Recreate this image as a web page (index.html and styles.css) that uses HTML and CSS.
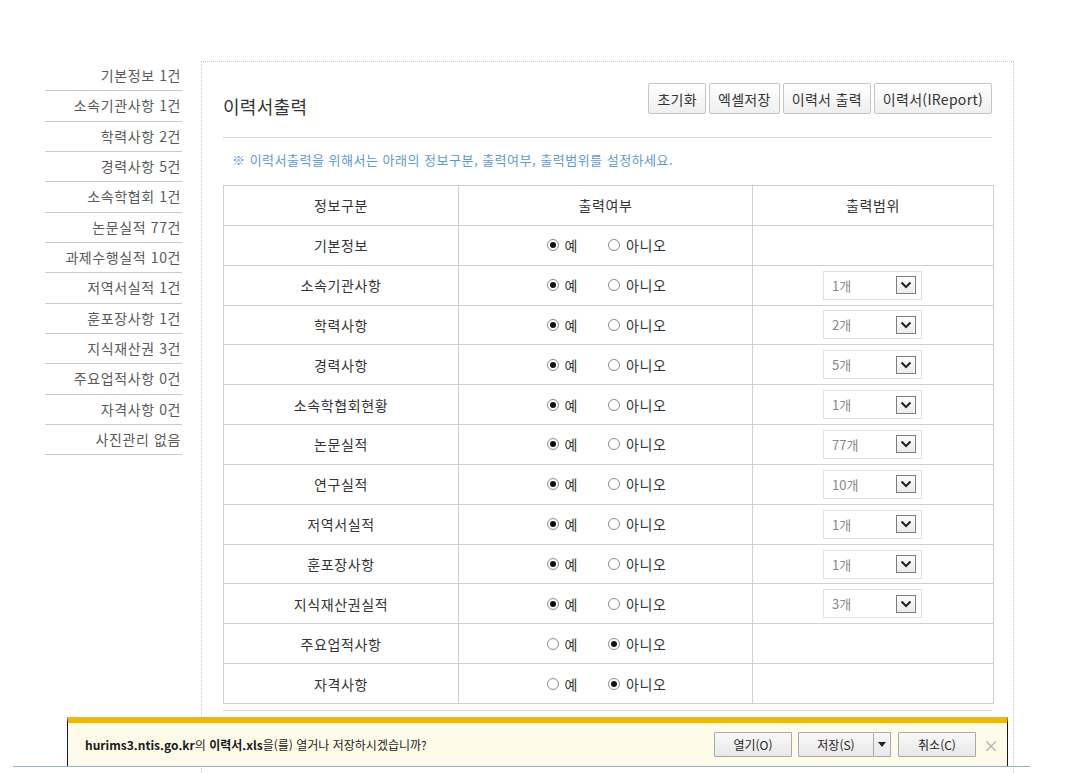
FILE: index.html
```html
<!DOCTYPE html>
<html lang="ko">
<head>
<meta charset="utf-8">
<title>이력서출력</title>
<link rel="stylesheet" href="styles.css">
</head>
<body>
<div class="page">
  <ul class="sidebar">
    <li>기본정보 1건</li>
    <li>소속기관사항 1건</li>
    <li>학력사항 2건</li>
    <li>경력사항 5건</li>
    <li>소속학협회 1건</li>
    <li>논문실적 77건</li>
    <li>과제수행실적 10건</li>
    <li>저역서실적 1건</li>
    <li>훈포장사항 1건</li>
    <li>지식재산권 3건</li>
    <li>주요업적사항 0건</li>
    <li>자격사항 0건</li>
    <li>사진관리 없음</li>
  </ul>
  <div class="main">
    <div class="head">
      <h1 class="title">이력서출력</h1>
      <div class="btns">
        <button class="btn">초기화</button>
        <button class="btn">엑셀저장</button>
        <button class="btn">이력서 출력</button>
        <button class="btn">이력서(IReport)</button>
      </div>
    </div>
    <p class="notice">※ 이력서출력을 위해서는 아래의 정보구분, 출력여부, 출력범위를 설정하세요.</p>
    <table class="grid">
      <colgroup><col class="c1"><col class="c2"><col class="c3"></colgroup>
      <thead>
        <tr><th>정보구분</th><th>출력여부</th><th>출력범위</th></tr>
      </thead>
      <tbody>
        <tr><td>기본정보</td><td><div class="radios"><span class="opt"><i class="rb on"></i>예</span><span class="opt"><i class="rb"></i>아니오</span></div></td><td></td></tr>
        <tr><td>소속기관사항</td><td><div class="radios"><span class="opt"><i class="rb on"></i>예</span><span class="opt"><i class="rb"></i>아니오</span></div></td><td><div class="sel"><span>1개</span><b class="arr"><svg viewBox="0 0 12 8" width="12" height="8"><path d="M1.5 1.5 L6 6 L10.5 1.5" fill="none" stroke="#222" stroke-width="2"/></svg></b></div></td></tr>
        <tr><td>학력사항</td><td><div class="radios"><span class="opt"><i class="rb on"></i>예</span><span class="opt"><i class="rb"></i>아니오</span></div></td><td><div class="sel"><span>2개</span><b class="arr"><svg viewBox="0 0 12 8" width="12" height="8"><path d="M1.5 1.5 L6 6 L10.5 1.5" fill="none" stroke="#222" stroke-width="2"/></svg></b></div></td></tr>
        <tr><td>경력사항</td><td><div class="radios"><span class="opt"><i class="rb on"></i>예</span><span class="opt"><i class="rb"></i>아니오</span></div></td><td><div class="sel"><span>5개</span><b class="arr"><svg viewBox="0 0 12 8" width="12" height="8"><path d="M1.5 1.5 L6 6 L10.5 1.5" fill="none" stroke="#222" stroke-width="2"/></svg></b></div></td></tr>
        <tr><td>소속학협회현황</td><td><div class="radios"><span class="opt"><i class="rb on"></i>예</span><span class="opt"><i class="rb"></i>아니오</span></div></td><td><div class="sel"><span>1개</span><b class="arr"><svg viewBox="0 0 12 8" width="12" height="8"><path d="M1.5 1.5 L6 6 L10.5 1.5" fill="none" stroke="#222" stroke-width="2"/></svg></b></div></td></tr>
        <tr><td>논문실적</td><td><div class="radios"><span class="opt"><i class="rb on"></i>예</span><span class="opt"><i class="rb"></i>아니오</span></div></td><td><div class="sel"><span>77개</span><b class="arr"><svg viewBox="0 0 12 8" width="12" height="8"><path d="M1.5 1.5 L6 6 L10.5 1.5" fill="none" stroke="#222" stroke-width="2"/></svg></b></div></td></tr>
        <tr><td>연구실적</td><td><div class="radios"><span class="opt"><i class="rb on"></i>예</span><span class="opt"><i class="rb"></i>아니오</span></div></td><td><div class="sel"><span>10개</span><b class="arr"><svg viewBox="0 0 12 8" width="12" height="8"><path d="M1.5 1.5 L6 6 L10.5 1.5" fill="none" stroke="#222" stroke-width="2"/></svg></b></div></td></tr>
        <tr><td>저역서실적</td><td><div class="radios"><span class="opt"><i class="rb on"></i>예</span><span class="opt"><i class="rb"></i>아니오</span></div></td><td><div class="sel"><span>1개</span><b class="arr"><svg viewBox="0 0 12 8" width="12" height="8"><path d="M1.5 1.5 L6 6 L10.5 1.5" fill="none" stroke="#222" stroke-width="2"/></svg></b></div></td></tr>
        <tr><td>훈포장사항</td><td><div class="radios"><span class="opt"><i class="rb on"></i>예</span><span class="opt"><i class="rb"></i>아니오</span></div></td><td><div class="sel"><span>1개</span><b class="arr"><svg viewBox="0 0 12 8" width="12" height="8"><path d="M1.5 1.5 L6 6 L10.5 1.5" fill="none" stroke="#222" stroke-width="2"/></svg></b></div></td></tr>
        <tr><td>지식재산권실적</td><td><div class="radios"><span class="opt"><i class="rb on"></i>예</span><span class="opt"><i class="rb"></i>아니오</span></div></td><td><div class="sel"><span>3개</span><b class="arr"><svg viewBox="0 0 12 8" width="12" height="8"><path d="M1.5 1.5 L6 6 L10.5 1.5" fill="none" stroke="#222" stroke-width="2"/></svg></b></div></td></tr>
        <tr><td>주요업적사항</td><td><div class="radios"><span class="opt"><i class="rb"></i>예</span><span class="opt"><i class="rb on"></i>아니오</span></div></td><td></td></tr>
        <tr><td>자격사항</td><td><div class="radios"><span class="opt"><i class="rb"></i>예</span><span class="opt"><i class="rb on"></i>아니오</span></div></td><td></td></tr>
      </tbody>
    </table>
    <div class="bottom-rule"></div>
  </div>
</div>

<div class="dlbar">
  <div class="dl-inner">
    <p class="dl-msg"><b>hurims3.ntis.go.kr</b>의 <b>이력서.xls</b>을(를) 열거나 저장하시겠습니까?</p>
    <div class="dl-btns">
      <button class="dbtn open">열기(O)</button>
      <div class="split"><button class="dbtn save">저장(S)</button><button class="dbtn drop"><svg viewBox="0 0 8 5" width="8" height="5"><path d="M0 0 H8 L4 5 Z" fill="#222"/></svg></button></div>
      <button class="dbtn cancel">취소(C)</button>
      <span class="dl-close">×</span>
    </div>
  </div>
</div>
<div class="statusline"></div>
</body>
</html>
```
FILE: styles.css
```css
* { box-sizing: border-box; }
html, body { margin: 0; padding: 0; background: #fff; }
body {
  font-family: "Noto Sans CJK KR", "Noto Sans", sans-serif;
  font-size: 14px;
  color: #333;
  height: 773px;
  overflow: hidden;
}
.page {
  display: flex;
  align-items: flex-start;
  padding: 61px 0 0 45px;
  gap: 19px;
}
.sidebar {
  list-style: none;
  margin: 0;
  padding: 0;
  width: 137px;
}
.sidebar li {
  height: 30.33px;
  border-bottom: 1px solid #c9c9c9;
  text-align: right;
  padding-right: 1px;
  line-height: 29px;
  font-size: 14px;
  letter-spacing: 0.6px;
  color: #5a5a5a;
  white-space: nowrap;
}
.main {
  width: 813px;
  height: 740px;
  border: 1px dotted #c8c8c8;
  border-bottom: none;
  padding: 21px 21px 0 21px;
}
.head {
  display: flex;
  justify-content: space-between;
  align-items: flex-start;
  height: 55px;
  border-bottom: 1px solid #d6d6d6;
}
.title {
  margin: 10px 0 0 0;
  font-size: 18px;
  letter-spacing: 0.3px;
  font-weight: normal;
  color: #333;
}
.btns { display: flex; gap: 3px; }
.btn {
  font-family: inherit;
  font-size: 14px;
  letter-spacing: 0.3px;
  color: #333;
  height: 31px;
  padding: 0 8px;
  background: linear-gradient(#ffffff, #efefef);
  border: 1px solid #c6c6c6;
  border-radius: 2px;
}
.notice {
  margin: 12px 0 0 9px;
  font-size: 13px;
  letter-spacing: 0.5px;
  color: #5b9bd5;
  height: 35px;
}
.grid {
  width: 770px;
  border-collapse: collapse;
  table-layout: fixed;
}
.c1 { width: 235px; }
.c2 { width: 294px; }
.c3 { width: 241px; }
.grid th, .grid td {
  border: 1px solid #cfcfcf;
  height: 39.85px;
  padding: 0;
  text-align: center;
  font-weight: normal;
  font-size: 14px;
  letter-spacing: 0.6px;
  color: #333;
}
.radios {
  display: flex;
  justify-content: center;
  gap: 30px;
  padding-left: 2px;
}
.opt { display: inline-flex; align-items: center; gap: 6px; }
.rb {
  display: inline-block;
  width: 12px; height: 12px;
  border: 1px solid #8a8a8a;
  border-radius: 50%;
  background: #fff;
  position: relative;
}
.rb.on::after {
  content: "";
  position: absolute;
  left: 2px; top: 2px;
  width: 6px; height: 6px;
  border-radius: 50%;
  background: #111;
}
.sel {
  display: flex;
  align-items: center;
  justify-content: space-between;
  width: 99px;
  height: 29px;
  margin-left: 70px;
  border: 1px solid #e0e0e0;
  padding: 0 5px 0 8px;
  color: #888;
  font-size: 13px;
  letter-spacing: 0;
}
.arr {
  display: flex;
  align-items: center;
  justify-content: center;
  width: 20px; height: 18px;
  border: 1px solid #7d7d7d;
  background: linear-gradient(#fdfdfd, #ececec);
}
.bottom-rule {
  margin-top: 6px;
  border-top: 1px solid #d6d6d6;
}
.dlbar {
  position: fixed;
  left: 67px;
  top: 717px;
  width: 941px;
  height: 50px;
  border: 1px solid #1a1a1a;
  border-top: 6px solid #efb700;
  background: #fffbea;
}
.dl-inner {
  display: flex;
  justify-content: space-between;
  align-items: center;
  height: 100%;
  padding: 0 8px 0 17px;
}
.dl-msg {
  margin: 0;
  font-size: 12px;
  color: #1a1a1a;
  font-family: "Noto Sans CJK KR", "Liberation Sans", sans-serif;
}
.dl-msg b { font-weight: bold; }
.dl-btns { display: flex; align-items: center; gap: 6px; }
.dbtn {
  font-family: inherit;
  font-size: 12px;
  color: #222;
  height: 25px;
  background: linear-gradient(#f8f8f8, #e8e8e8);
  border: 1px solid #aaa;
  border-radius: 1px;
  padding: 0;
}
.open { width: 78px; }
.split { display: flex; }
.save { width: 76px; }
.drop { width: 17px; border-left: none; display: flex; align-items: center; justify-content: center; }
.cancel { width: 78px; margin-left: 1px; }
.dl-close { color: #aaa; font-size: 16px; margin-left: 1px; line-height: 1; }
.statusline {
  position: fixed;
  left: 13px;
  top: 766px;
  width: 1017px;
  height: 1px;
  background: #8fb4c4;
}
```
